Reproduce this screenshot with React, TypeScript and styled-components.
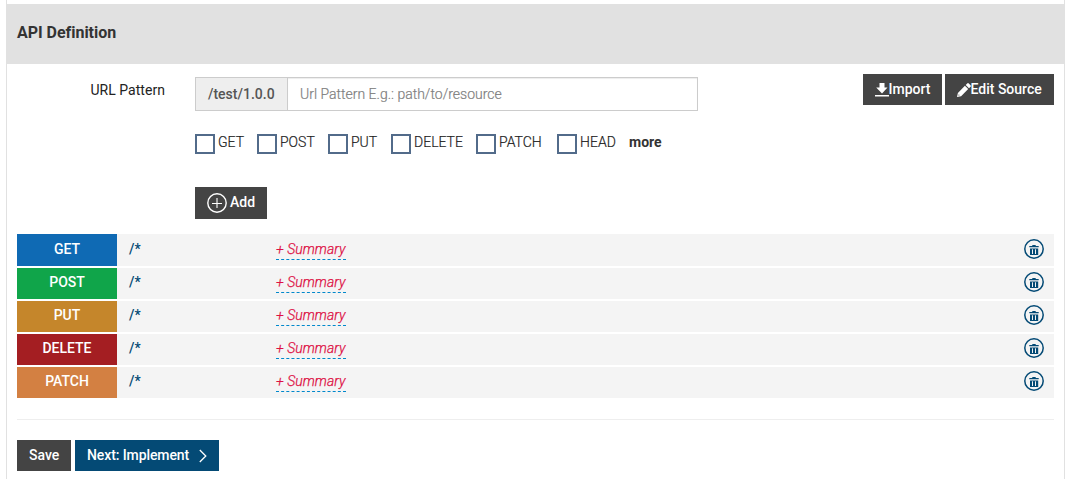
import React from "react";
import styled, { createGlobalStyle } from "styled-components";

const Global = createGlobalStyle`
  * { box-sizing: border-box; }
  body {
    margin: 0;
    background: #fff;
    color: #333;
    font: 400 14px/20px Roboto, "Liberation Sans", sans-serif;
    overflow: hidden;
  }
`;

const Panel = styled.main`
  width: 1059px;
  height: 479px;
  margin-left: 6px;
  padding-top: 4px;
  border: solid #e1e1e1;
  border-width: 0 1px;
`;

const Heading = styled.h1`
  height: 60px;
  margin: 0;
  padding: 18px 10px;
  background: #e1e1e1;
  font-size: 16px;
  line-height: 21px;
  font-weight: 700;
  letter-spacing: -0.03px;
`;

const Content = styled.div`
  padding: 10px 10px 0;
`;

const FormArea = styled.section`
  display: flex;
  height: 160px;
`;

const FieldLabel = styled.label`
  width: 148px;
  margin-right: 30px;
  padding-top: 6px;
  text-align: right;
  letter-spacing: 0.04px;
  color: #222;
`;

const Fields = styled.div`
  width: 503px;
  padding-top: 3px;
`;

const InputGroup = styled.div`
  display: flex;
  height: 34px;
  border: 1px solid #ccc;
`;

const Addon = styled.span`
  width: 92px;
  border-right: 1px solid #ccc;
  background: #eee;
  color: #555;
  font-weight: 500;
  line-height: 32px;
  padding-left: 12px;
`;

const PatternInput = styled.input`
  flex: 1;
  min-width: 0;
  border: 0;
  outline: 0;
  padding: 0 12px;
  font: 300 14px Roboto, sans-serif;
  box-shadow: inset 0 1px 1px rgba(0, 0, 0, 0.075);
  &::placeholder {
    color: #808080;
    opacity: 1;
    -webkit-text-stroke: 0.2px #808080;
  }
`;

const Methods = styled.div`
  display: flex;
  height: 20px;
  margin: 23px 0 33px;
`;

const Method = styled.label<{ $width: number }>`
  display: flex;
  width: ${(p) => p.$width}px;
  color: #222;
  font-weight: 300;
  line-height: 17px;
  white-space: nowrap;
  -webkit-text-stroke: 0.2px #222;
`;

const Check = styled.input.attrs({ type: "checkbox" })`
  appearance: none;
  flex: none;
  width: 20px;
  height: 20px;
  margin: 0 3px 0 0;
  border: 2px solid #526b8a;
  background: #fff;
`;

const More = styled.strong`
  line-height: 17px;
`;

const Button = styled.button<{ $width: number; $height?: number; $primary?: boolean }>`
  display: flex;
  align-items: center;
  width: ${(p) => p.$width}px;
  height: ${(p) => p.$height ?? 31}px;
  padding: 0 0 0 12px;
  border: 0;
  background: ${(p) => (p.$primary ? "#044a75" : "#444")};
  color: #fff;
  font: 500 14px/20px Roboto, sans-serif;
  white-space: nowrap;
  svg { flex: none; }
`;

const Actions = styled.div`
  display: flex;
  gap: 3px;
  margin-left: auto;
`;

const Footer = styled.footer`
  display: flex;
  gap: 4px;
  margin-top: 21px;
  padding-top: 20px;
  border-top: 1px solid #eee;
`;

const Resources = styled.section`
  display: grid;
  gap: 2px;
`;

const Row = styled.div`
  display: flex;
  height: 31px;
  background: #f4f4f4;
  line-height: 28px;
  &:first-child {
    height: 32px;
    line-height: 30px;
  }
`;

const Verb = styled.span<{ $color: string }>`
  width: 100px;
  background: ${(p) => p.$color};
  color: #fff;
  font-weight: 500;
  text-align: center;
`;

const Path = styled.a`
  width: 159px;
  padding-left: 12px;
  color: #044a75;
  font-weight: 500;
`;

const Summary = styled.a`
  width: 70px;
  height: 19px;
  margin-top: 6px;
  border-bottom: 1px dashed #08c;
  color: #dd1144;
  font-style: italic;
  font-weight: 300;
  letter-spacing: 0.04px;
  line-height: 16px;
  white-space: nowrap;
  -webkit-text-stroke: 0.25px #dd1144;
  ${Row}:first-child & { margin-top: 7px; }
`;

const Remove = styled.a`
  margin: 4px 10px 0 auto;
  height: 20px;
  svg { display: block; }
  ${Row}:first-child & { margin-top: 5px; }
`;

const DownloadIcon = () => (
  <svg width="14" height="16" viewBox="0 0 14 16" fill="#fff">
    <path d="M4.5 1h5v4.6h3L7 11.4 1.2 5.6h3.3zM0 13h14v1.6H0z" />
  </svg>
);

const PencilIcon = () => (
  <svg width="14" height="16" viewBox="0 0 14 16" fill="#fff">
    <path d="M0 15l.9-4.1 7-7.1 3.3 3.3-7.1 7.1zM8.7 3l1.5-1.5q.8-.8 1.6 0l1.7 1.7q.8.8 0 1.6L12 6.3z" />
    <circle cx="1.9" cy="13" r=".6" fill="#444" />
  </svg>
);

const PlusIcon = () => (
  <svg width="20" height="20" viewBox="0 0 20 20" fill="none" stroke="#fff">
    <circle cx="10" cy="10" r="9.2" strokeWidth="1.4" />
    <path d="M10 5v10M5 10.5h10" strokeWidth="1.1" />
  </svg>
);

const ChevronIcon = () => (
  <svg width="8" height="14" viewBox="0 0 8 14" fill="none" stroke="#fff" strokeWidth="1.3">
    <path d="M.8 1l6 6-6 6" />
  </svg>
);

const TrashIcon = () => (
  <svg width="20" height="20" viewBox="0 0 20 20" fill="#044a75">
    <circle cx="10" cy="10" r="9.2" fill="none" stroke="#044a75" strokeWidth="1.5" />
    <path d="M5.3 7h3V6h3.4v1h3v1.3H5.3zM6 9.5h8.2V16H6z" />
    <path d="M8.5 10.3v4.7M11.5 10.3v4.7" stroke="#f4f4f4" strokeWidth="1" />
  </svg>
);

const methods = [
  { name: "GET", width: 62 },
  { name: "POST", width: 71 },
  { name: "PUT", width: 63 },
  { name: "DELETE", width: 85 },
  { name: "PATCH", width: 81 },
  { name: "HEAD", width: 72 },
];

const resources = [
  { verb: "GET", color: "#0f6ab4" },
  { verb: "POST", color: "#10a54a" },
  { verb: "PUT", color: "#c5862b" },
  { verb: "DELETE", color: "#a41e22" },
  { verb: "PATCH", color: "#d38042" },
];

const ButtonText = styled.span<{ $left?: number; $right?: number; $spacing?: number }>`
  margin-left: ${(p) => p.$left ?? 0}px;
  margin-right: ${(p) => p.$right ?? 0}px;
  padding-bottom: 2px;
  letter-spacing: ${(p) => p.$spacing ?? 0}px;
`;

export default function App() {
  return (
    <>
      <Global />
      <Panel>
        <Heading>API Definition</Heading>
        <Content>
          <FormArea>
            <FieldLabel htmlFor="pattern">URL Pattern</FieldLabel>
            <Fields>
              <InputGroup>
                <Addon>/test/1.0.0</Addon>
                <PatternInput id="pattern" placeholder="Url Pattern E.g.: path/to/resource" />
              </InputGroup>
              <Methods>
                {methods.map((m) => (
                  <Method key={m.name} $width={m.width}>
                    <Check />
                    {m.name}
                  </Method>
                ))}
                <More>more</More>
              </Methods>
              <Button $width={72} $height={32}>
                <PlusIcon />
                <ButtonText $left={3}>Add</ButtonText>
              </Button>
            </Fields>
            <Actions>
              <Button $width={79}>
                <DownloadIcon />
                <ButtonText $left={-0.5}>Import</ButtonText>
              </Button>
              <Button $width={109}>
                <PencilIcon />
                <ButtonText $left={-0.5}>Edit Source</ButtonText>
              </Button>
            </Actions>
          </FormArea>
          <Resources>
            {resources.map((r) => (
              <Row key={r.verb}>
                <Verb $color={r.color}>{r.verb}</Verb>
                <Path>/*</Path>
                <Summary>+ Summary</Summary>
                <Remove>
                  <TrashIcon />
                </Remove>
              </Row>
            ))}
          </Resources>
          <Footer>
            <Button $width={54}>
              <ButtonText>Save</ButtonText>
            </Button>
            <Button $width={144} $primary>
              <ButtonText $right={10} $spacing={-0.1}>Next: Implement</ButtonText>
              <ChevronIcon />
            </Button>
          </Footer>
        </Content>
      </Panel>
    </>
  );
}
